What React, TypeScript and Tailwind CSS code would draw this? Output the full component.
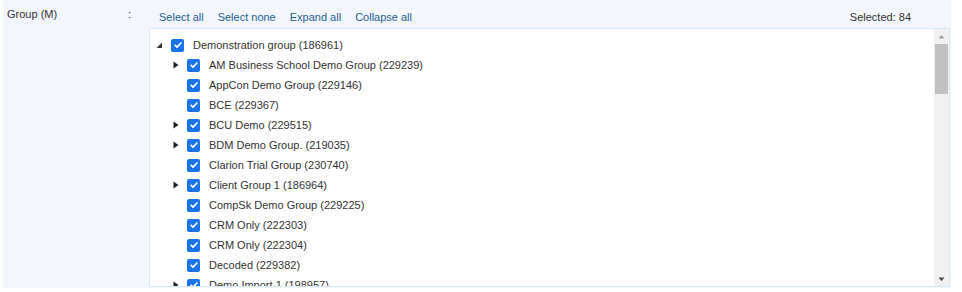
type Node = { label: string; expandable?: boolean };

const children: Node[] = [
  { label: "AM Business School Demo Group (229239)", expandable: true },
  { label: "AppCon Demo Group (229146)" },
  { label: "BCE (229367)" },
  { label: "BCU Demo (229515)", expandable: true },
  { label: "BDM Demo Group. (219035)", expandable: true },
  { label: "Clarion Trial Group (230740)" },
  { label: "Client Group 1 (186964)", expandable: true },
  { label: "CompSk Demo Group (229225)" },
  { label: "CRM Only (222303)" },
  { label: "CRM Only (222304)" },
  { label: "Decoded (229382)" },
  { label: "Demo Import 1 (198957)", expandable: true },
];

function Check() {
  return (
    <span className="flex h-[13px] w-[13px] shrink-0 items-center justify-center rounded-[2px] bg-[#1a73e8]">
      <svg viewBox="0 0 12 12" className="h-[10px] w-[10px]" fill="none" stroke="white" strokeWidth="2" strokeLinecap="round" strokeLinejoin="round">
        <path d="M2.5 6.3l2.3 2.3 4.7-5" />
      </svg>
    </span>
  );
}

function Collapsed() {
  return (
    <svg viewBox="0 0 8 8" className="h-[8px] w-[8px]">
      <path d="M1.5 0.5l5 3.5-5 3.5z" fill="#222" />
    </svg>
  );
}

function Expanded() {
  return (
    <svg viewBox="0 0 8 8" className="h-[8px] w-[8px]">
      <path d="M7 1.5v5.5h-5.5z" fill="#333" />
    </svg>
  );
}

export default function App() {
  return (
    <div className="h-[292px] w-[962px] bg-white pl-[3px] font-['Liberation_Sans',sans-serif] text-[11px] text-[#333]">
      <div className="flex h-[288px] w-[948px] bg-[#f4f6fd]">
        <div className="w-[125px] pl-[4px] pt-[6px]">Group (M)</div>
        <div className="w-[21px] pt-[6px]">:</div>
        <div className="flex flex-1 flex-col pr-[1px] pt-[9px]">
          <div className="flex h-[19px] items-start justify-between pl-[10px] pr-[39px]">
            <div className="flex gap-[14px] text-[#1f5f8f]">
              <span>Select all</span>
              <span>Select none</span>
              <span>Expand all</span>
              <span>Collapse all</span>
            </div>
            <span>Selected: 84</span>
          </div>
          <div className="flex h-[259px] overflow-hidden border border-[#d4e8f6] bg-white">
            <div className="flex-1 overflow-hidden pl-[5px] pt-[6px]">
              <div className="flex h-[20px] items-center">
                <span className="flex w-[16px] justify-start"><Expanded /></span>
                <Check />
                <span className="ml-[9px]">Demonstration group (186961)</span>
              </div>
              {children.map((c) => (
                <div key={c.label} className="flex h-[20px] items-center pl-[17px]">
                  <span className="flex w-[15px]">{c.expandable ? <Collapsed /> : null}</span>
                  <Check />
                  <span className="ml-[9px] whitespace-nowrap">{c.label}</span>
                </div>
              ))}
            </div>
            <div className="flex w-[15px] flex-col bg-[#f1f1f1]">
              <div className="flex h-[15px] items-center justify-center">
                <svg viewBox="0 0 8 8" className="h-[6px] w-[7px]"><path d="M0 6l4-5 4 5z" fill="#a3a3a3" /></svg>
              </div>
              <div className="mx-[1px] h-[50px] bg-[#c1c1c1]" />
              <div className="flex-1" />
              <div className="flex h-[15px] items-center justify-center">
                <svg viewBox="0 0 8 8" className="h-[6px] w-[7px]"><path d="M0 2l4 5 4-5z" fill="#505050" /></svg>
              </div>
            </div>
          </div>
        </div>
      </div>
    </div>
  );
}
